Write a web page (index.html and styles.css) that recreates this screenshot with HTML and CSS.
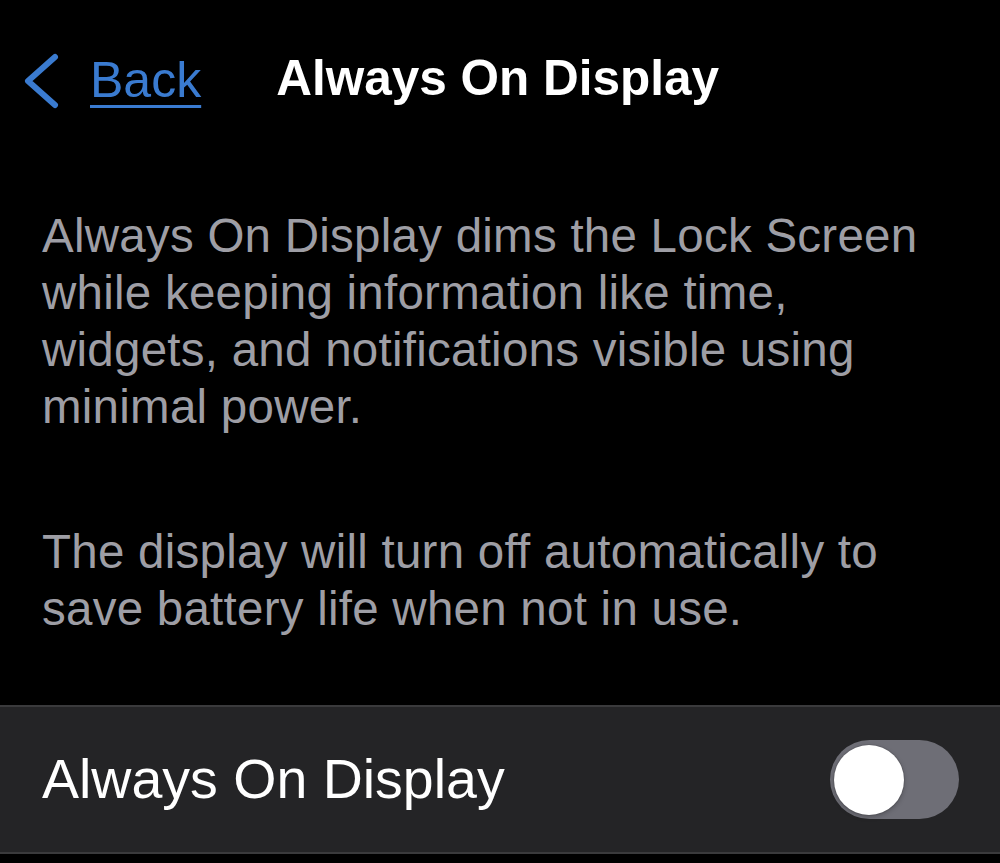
FILE: index.html
```html
<!DOCTYPE html>
<html lang="en">
<head>
<meta charset="utf-8">
<title>Always On Display</title>
<link rel="stylesheet" href="styles.css">
</head>
<body>
<header class="nav">
  <a class="nav-back" href="#">
    <svg class="nav-chevron" width="38" height="58" viewBox="0 0 38 58" aria-hidden="true">
      <polyline points="33,5 6,29 33,53" fill="none" stroke="currentColor" stroke-width="6" stroke-linecap="round" stroke-linejoin="round"/>
    </svg>
    <span class="nav-back-label">Back</span>
  </a>
  <h1 class="nav-title">Always On Display</h1>
</header>

<main class="content">
  <p class="note">Always On Display dims the Lock Screen while keeping information like time, widgets, and notifications visible using minimal power.</p>
  <p class="note">The display will turn off automatically to save battery life when not in use.</p>

  <div class="group">
    <div class="cell">
      <span class="cell-label">Always On Display</span>
      <span class="switch" role="switch" aria-checked="false"><span class="switch-knob"></span></span>
    </div>
  </div>
</main>
</body>
</html>
```

FILE: styles.css
```css
* {
  box-sizing: border-box;
}

html, body {
  margin: 0;
  padding: 0;
  background: #000;
}

body {
  font-family: "Liberation Sans", Arial, Helvetica, sans-serif;
  color: #fff;
  width: 1000px;
  height: 863px;
  overflow: hidden;
}

/* navigation bar */
.nav {
  height: 160px;
  display: flex;
  align-items: center;
}

.nav-back {
  display: flex;
  align-items: center;
  color: #3a7bd0;
  text-decoration: none;
  margin-left: 22px;
}

.nav-chevron {
  display: block;
  margin-top: 2px;
}

.nav-back-label {
  margin-left: 30px;
  font-size: 50px;
  line-height: 1;
  text-decoration: underline;
  text-decoration-thickness: 3px;
  text-underline-offset: 8px;
}

.nav-title {
  margin: 0 0 4px 75px;
  font-size: 49.5px;
  font-weight: 700;
  line-height: 1;
}

/* explanatory notes */
.content {
  display: flex;
  flex-direction: column;
}

.note {
  margin: 0;
  padding: 0 50px 0 42px;
  font-size: 47.5px;
  line-height: 57px;
  letter-spacing: 0.25px;
  color: #9e9ea5;
}

.note:first-child {
  margin-top: 47px;
}

.note + .note {
  margin-top: 88px;
}

/* settings group */
.group {
  margin-top: 68px;
  background: #242426;
  border-top: 2px solid #3a3a3c;
  border-bottom: 2px solid #3a3a3c;
}

.cell {
  height: 145px;
  display: flex;
  align-items: center;
  justify-content: space-between;
  padding: 0 41px 0 42px;
}

.cell-label {
  font-size: 55.5px;
  line-height: 1;
  color: #fff;
}

.switch {
  width: 129px;
  height: 79px;
  border-radius: 40px;
  background: #6e6e76;
  display: flex;
  align-items: center;
  padding: 0 4px;
}

.switch-knob {
  width: 70px;
  height: 70px;
  border-radius: 50%;
  background: #fff;
  box-shadow: 0 0 0 1px rgba(0, 0, 0, 0.08), 0 2px 5px rgba(0, 0, 0, 0.25);
}
```
